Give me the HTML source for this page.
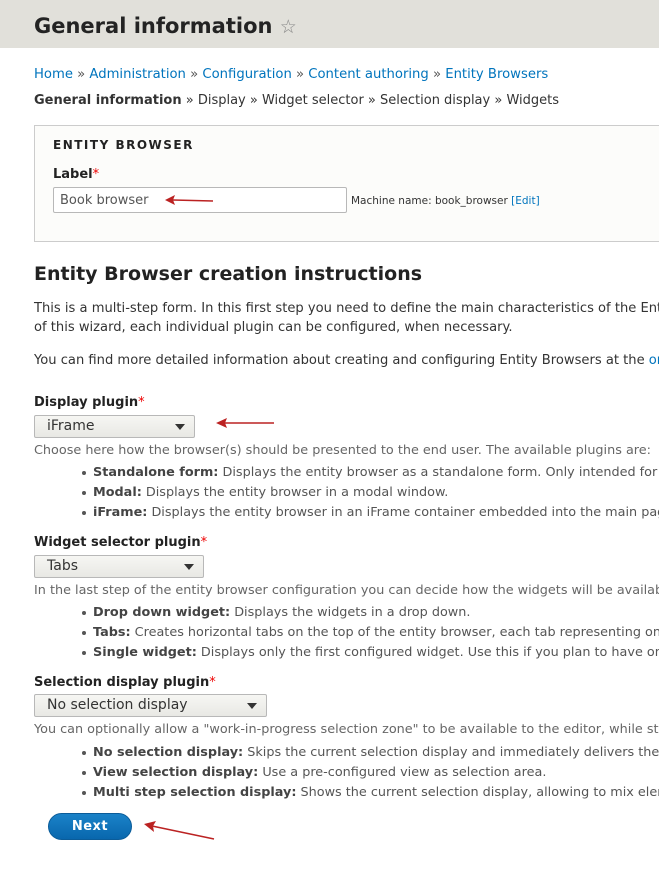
<!DOCTYPE html>
<html><head><meta charset="utf-8"><style>
*{margin:0;padding:0;box-sizing:border-box}
html,body{width:659px;height:870px;overflow:hidden}
body{background:#fff;font-family:"DejaVu Sans","Liberation Sans",sans-serif;color:#333}
#w{position:relative;width:659px;height:870px;overflow:hidden}
.a{position:absolute;white-space:nowrap}
.hdr{position:absolute;left:0;top:0;width:659px;height:48px;background:#e1e0da}
h1{position:absolute;left:34px;top:14px;font-size:21px;font-weight:bold;color:#232323;white-space:nowrap}
.bc{font-size:13.2px;color:#0074bd}
.bc span{color:#555}
.s13{font-size:13px;color:#333}
.p{font-size:13.1px}
.lbl{font-size:13px;font-weight:bold;color:#222}
.req{color:#e00;font-weight:normal}
.desc{font-size:12.8px;color:#666}
.li{font-size:12.8px;color:#555}
.li b{color:#444}
.dot{position:absolute;width:4px;height:4px;border-radius:2px;background:#555}
.sel{position:absolute;height:23px;border:1px solid #b8b8b8;border-radius:2px;background:linear-gradient(#f6f6f3,#e8e8e4);font-size:14px;color:#333;padding:2px 0 0 12px}
.sel:after{content:"";position:absolute;right:9px;top:8px;border-left:5px solid transparent;border-right:5px solid transparent;border-top:6px solid #333}
.arrow{position:absolute}
</style></head><body><div id="w">
<div class="hdr"></div>
<h1>General information <span style="font-weight:normal;color:#888;font-size:19px">☆</span></h1>
<div class="a bc" style="left:34px;top:67px">Home <span>»</span> Administration <span>»</span> Configuration <span>»</span> Content authoring <span>»</span> Entity Browsers</div>
<div class="a s13" style="left:34px;top:93px"><b>General information</b> » Display » Widget selector » Selection display » Widgets</div>
<div style="position:absolute;left:34px;top:125px;width:640px;height:117px;border:1px solid #ccc;background:#fcfcfa"></div>
<div class="a" style="left:53px;top:138px;font-size:12px;font-weight:bold;letter-spacing:1.5px;color:#222">ENTITY BROWSER</div>
<div class="a lbl" style="left:53px;top:167px">Label<span class="req">*</span></div>
<div style="position:absolute;left:53px;top:187px;width:294px;height:26px;border:1px solid #b8b8b8;border-radius:2px;background:#fff;font-size:13px;color:#555;padding:5px 0 0 6px">Book browser</div>
<div class="a" style="left:351px;top:195px;font-size:10.5px;color:#333">Machine name: book_browser <span style="color:#0074bd">[Edit]</span></div>
<svg class="arrow" style="left:165px;top:194px" width="50" height="12"><line x1="8" y1="6" x2="48" y2="7" stroke="#b22" stroke-width="1.6"/><path d="M0 6 L10 1 L8 6 L10 11Z" fill="#b22"/></svg>
<div class="a" style="left:34px;top:263px;font-size:19px;font-weight:bold;color:#222">Entity Browser creation instructions</div>
<div class="a s13 p" style="left:34px;top:301px">This is a multi-step form. In this first step you need to define the main characteristics of the Entity Browser</div>
<div class="a s13 p" style="left:34px;top:320px">of this wizard, each individual plugin can be configured, when necessary.</div>
<div class="a s13 p" style="left:34px;top:353px">You can find more detailed information about creating and configuring Entity Browsers at the <span style="color:#0074bd">online</span></div>

<div class="a lbl" style="left:34px;top:395px">Display plugin<span class="req">*</span></div>
<div class="sel" style="left:34px;top:415px;width:161px">iFrame</div>
<svg class="arrow" style="left:216px;top:417px" width="60" height="12"><line x1="8" y1="6" x2="58" y2="6" stroke="#b22" stroke-width="1.6"/><path d="M0 6 L11 1 L9 6 L11 11Z" fill="#b22"/></svg>
<div class="a desc" style="left:34px;top:443px">Choose here how the browser(s) should be presented to the end user. The available plugins are:</div>
<div class="dot" style="left:82px;top:471px"></div><div class="a li" style="left:93px;top:465px"><b>Standalone form:</b> Displays the entity browser as a standalone form. Only intended for testing</div>
<div class="dot" style="left:82px;top:491px"></div><div class="a li" style="left:93px;top:485px"><b>Modal:</b> Displays the entity browser in a modal window.</div>
<div class="dot" style="left:82px;top:511px"></div><div class="a li" style="left:93px;top:505px"><b>iFrame:</b> Displays the entity browser in an iFrame container embedded into the main page</div>

<div class="a lbl" style="left:34px;top:535px">Widget selector plugin<span class="req">*</span></div>
<div class="sel" style="left:34px;top:555px;width:170px">Tabs</div>
<div class="a desc" style="left:34px;top:583px">In the last step of the entity browser configuration you can decide how the widgets will be available</div>
<div class="dot" style="left:82px;top:611px"></div><div class="a li" style="left:93px;top:605px"><b>Drop down widget:</b> Displays the widgets in a drop down.</div>
<div class="dot" style="left:82px;top:631px"></div><div class="a li" style="left:93px;top:625px"><b>Tabs:</b> Creates horizontal tabs on the top of the entity browser, each tab representing one</div>
<div class="dot" style="left:82px;top:651px"></div><div class="a li" style="left:93px;top:645px"><b>Single widget:</b> Displays only the first configured widget. Use this if you plan to have only</div>

<div class="a lbl" style="left:34px;top:675px">Selection display plugin<span class="req">*</span></div>
<div class="sel" style="left:34px;top:694px;width:233px">No selection display</div>
<div class="a desc" style="left:34px;top:722px">You can optionally allow a "work-in-progress selection zone" to be available to the editor, while still</div>
<div class="dot" style="left:82px;top:751px"></div><div class="a li" style="left:93px;top:745px"><b>No selection display:</b> Skips the current selection display and immediately delivers the entities</div>
<div class="dot" style="left:82px;top:771px"></div><div class="a li" style="left:93px;top:765px"><b>View selection display:</b> Use a pre-configured view as selection area.</div>
<div class="dot" style="left:82px;top:791px"></div><div class="a li" style="left:93px;top:785px"><b>Multi step selection display:</b> Shows the current selection display, allowing to mix elements</div>

<div style="position:absolute;left:48px;top:813px;width:84px;height:27px;border-radius:14px;background:linear-gradient(#1a82c8,#0967ad);border:1px solid #0b5c99;color:#fff;font-size:13px;font-weight:bold;text-align:center;line-height:25px;letter-spacing:.5px">Next</div>
<svg class="arrow" style="left:144px;top:821px" width="72" height="22"><line x1="8" y1="5" x2="70" y2="18" stroke="#b22" stroke-width="1.6"/><path d="M0 3 L12 0 L9 5 L10 11Z" fill="#b22"/></svg>
</div></body></html>
